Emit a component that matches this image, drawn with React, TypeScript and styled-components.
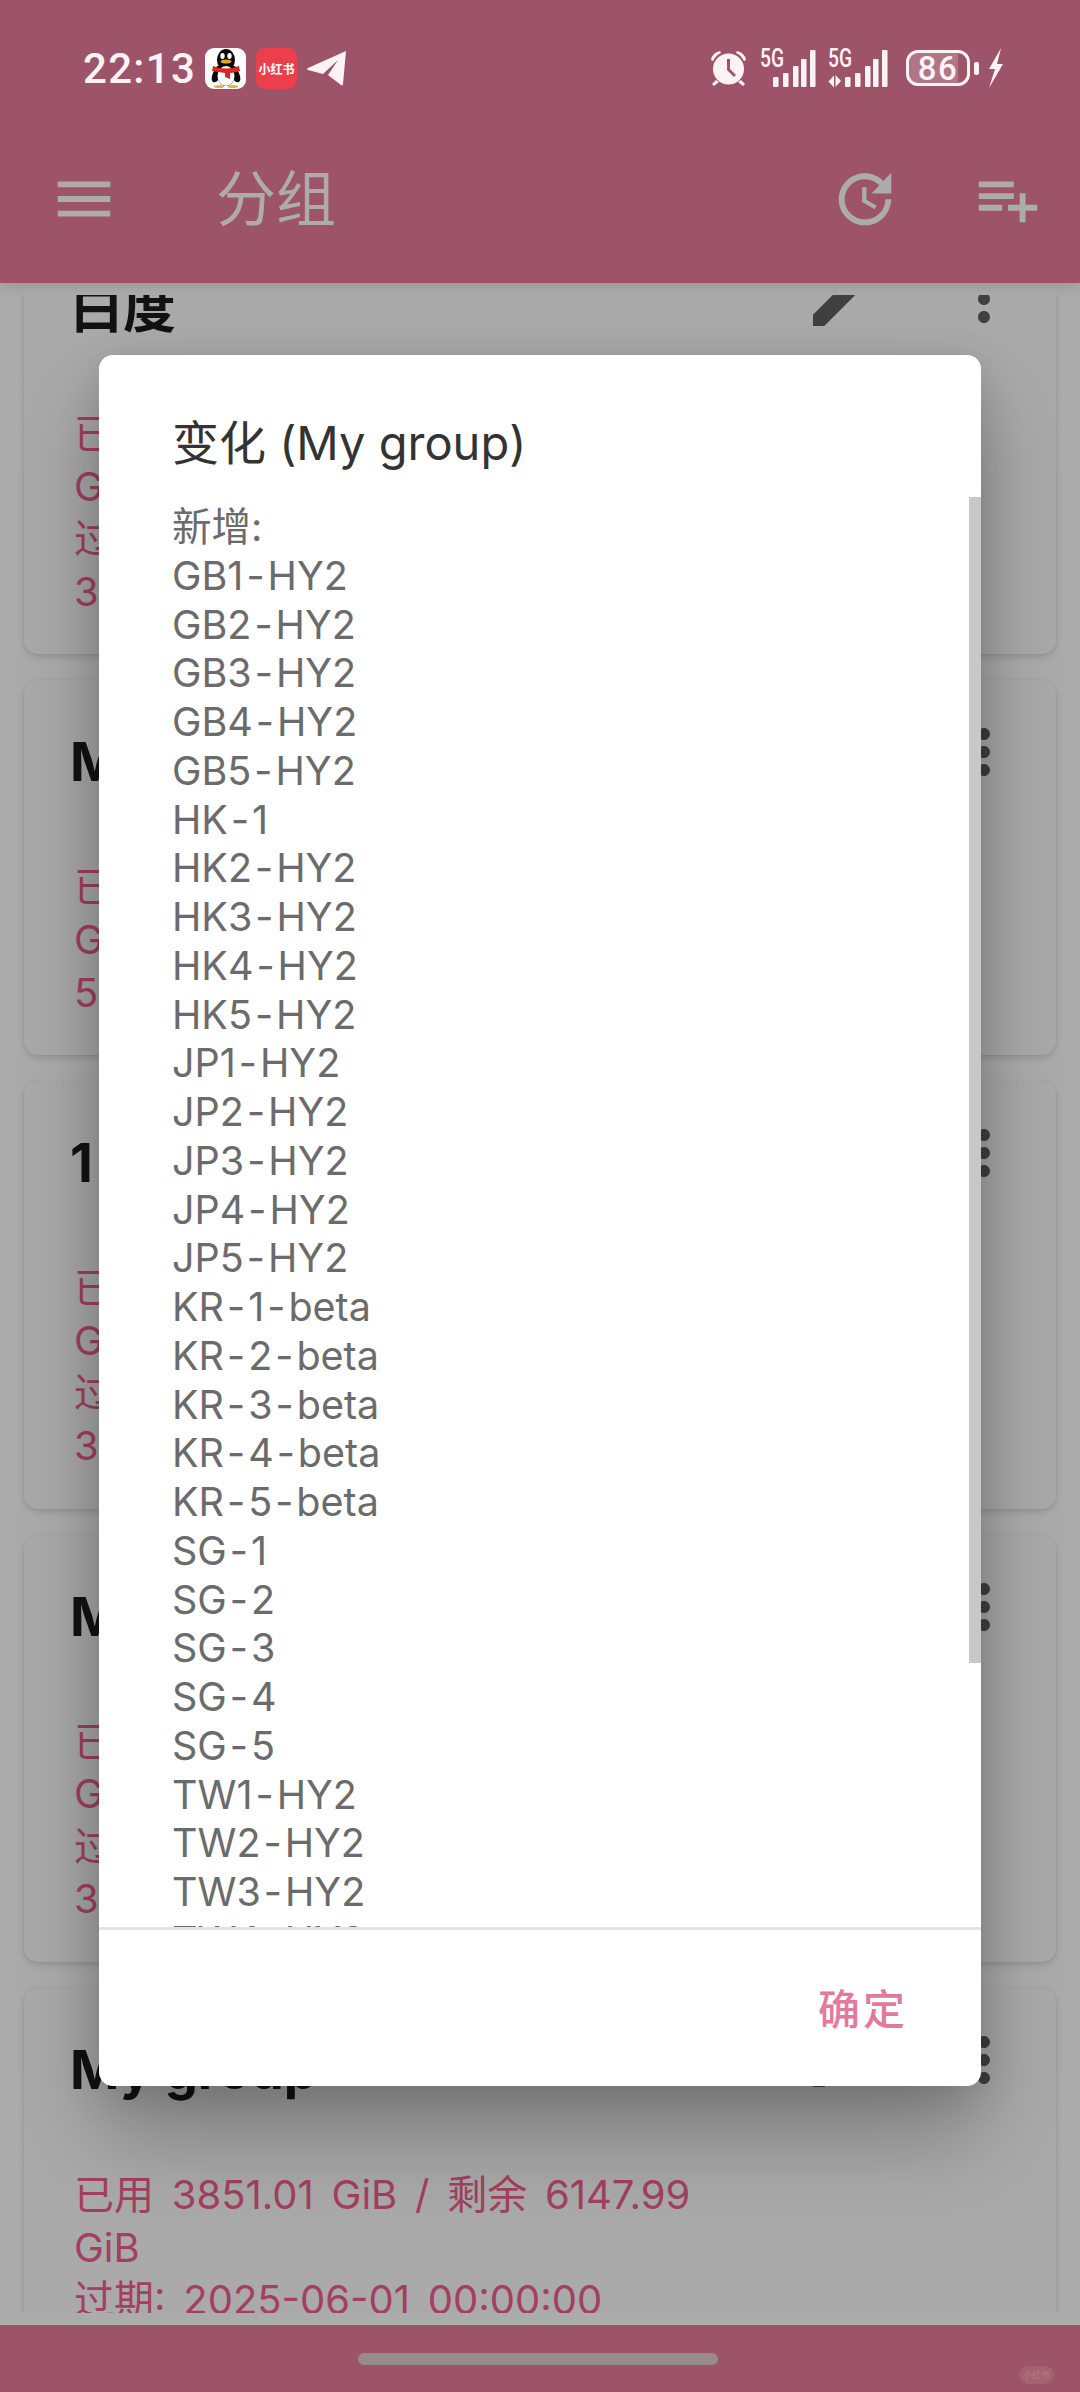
import React from "react";
import styled, { createGlobalStyle } from "styled-components";

const FONT = `Inter, "Noto Sans CJK SC", sans-serif`;
const CHROME = "#9d5468";
const DIM_ICON = "#acacac";
const STATUS = "#fdf3f6";

const Global = createGlobalStyle`
  html, body { margin: 0; padding: 0; background: #acacac; }
  body { font-family: ${FONT}; }
`;

const Page = styled.div`
  position: relative;
  width: 1080px;
  height: 2392px;
  overflow: hidden;
  display: flex;
  flex-direction: column;
  background: #acacac;
`;

const TopBar = styled.header`
  position: relative;
  z-index: 1;
  flex: none;
  height: 283px;
  background: ${CHROME};
  box-shadow: 0 4px 12px rgba(0, 0, 0, 0.12);
`;

const StatusBar = styled.div`
  height: 136px;
  padding: 0 77px 0 83px;
  display: flex;
  align-items: center;
  color: ${STATUS};
`;

const Time = styled.span`
  font-family: Roboto, sans-serif;
  font-size: 42px;
  font-weight: 500;
  letter-spacing: 1.3px;
  width: 122px;
`;

const AppTile = styled.span<{ $bg: string }>`
  width: 41px;
  height: 41px;
  margin-right: 10px;
  border-radius: 9px;
  background: ${(p) => p.$bg};
  display: flex;
  align-items: center;
  justify-content: center;
  overflow: hidden;
  flex: none;
`;

const RedBookLabel = styled.span`
  color: #fff;
  font-size: 12px;
  font-weight: 700;
  white-space: nowrap;
`;

const StatusRight = styled.div`
  margin-left: auto;
  display: flex;
  align-items: center;
`;

const BatteryShell = styled.div`
  width: 64px;
  height: 36px;
  box-sizing: border-box;
  margin-left: 17px;
  border: 3.5px solid ${STATUS};
  border-radius: 12px;
  background: linear-gradient(90deg, rgba(255, 255, 255, 0.2) 0 85%, transparent 85%);
  display: flex;
  align-items: center;
  justify-content: center;
  font-family: Roboto, sans-serif;
  font-size: 33px;
  font-weight: 500;
  letter-spacing: 1.5px;
  line-height: 1;
`;

const BatteryNub = styled.span`
  width: 5px;
  height: 13px;
  margin-left: 4px;
  border-radius: 2px;
  background: ${STATUS};
`;

const AppBar = styled.div`
  height: 126px;
  padding: 0 37px 0 49px;
  display: flex;
  align-items: center;
  color: ${DIM_ICON};
`;

const AppTitle = styled.h1`
  margin: 0 0 0 97px;
  font-size: 60px;
  font-weight: 400;
  line-height: 1;
`;

const AppActions = styled.div`
  margin-left: auto;
  display: flex;
  align-items: center;
  gap: 73px;
`;

const Viewport = styled.main`
  flex: none;
  height: 2018px;
  margin: 12px 0;
  overflow: hidden;
`;

const CardList = styled.div`
  margin-top: -68px;
  padding: 0 24px;
  display: flex;
  flex-direction: column;
  gap: 26px;
`;

const Card = styled.article`
  padding: 36px 36px 36px 46px;
  border-radius: 14px;
  background: #aaaaaa;
  box-shadow: 0 3px 6px rgba(0, 0, 0, 0.13), 0 0 2px rgba(0, 0, 0, 0.07);
`;

const CardHead = styled.div`
  height: 74px;
  display: flex;
  align-items: flex-start;
`;

const CardTitle = styled.h2`
  margin: 18px auto 0 0;
  height: 56px;
  color: #121212;
  font-size: 53px;
  font-weight: 700;
  line-height: 56px;
`;

const CardIcons = styled.div`
  display: flex;
  gap: 72px;
  color: #404040;
`;

const CardBody = styled.div`
  margin: 71px 0 0 4px;
  color: #a3405f;
  font-size: 40px;
  word-spacing: 6.5px;
  line-height: 52.6px;
  width: 640px;
`;

const BodyLine = styled.div`
  white-space: nowrap;
`;

const Scrim = styled.div`
  position: absolute;
  inset: 0;
  z-index: 2;
  padding: 355px 0 0 99px;
`;

const Dialog = styled.section`
  position: relative;
  width: 882px;
  height: 1731px;
  border-radius: 14px;
  background: #fff;
  display: flex;
  flex-direction: column;
  overflow: visible;
  box-shadow: 0 50px 90px rgba(0, 0, 0, 0.26), 0 10px 40px rgba(0, 0, 0, 0.14);
`;

const DialogTitle = styled.h3`
  flex: none;
  height: 142px;
  box-sizing: border-box;
  margin: 0;
  padding: 57px 0 0 73px;
  color: #333;
  font-size: 47px;
  font-weight: 400;
  line-height: 62px;
`;

const ChangeList = styled.div`
  flex: none;
  height: 1433px;
  box-sizing: border-box;
  padding: 6px 0 0 73px;
  overflow: hidden;
  color: #6b6b6b;
  font-size: 39.5px;
  line-height: 48.75px;
  border-bottom: 3px solid #e4e4e4;
`;

const Dash = styled.span`
  margin: 0 3px;
`;

const ScrollThumb = styled.div`
  position: absolute;
  top: 142px;
  right: 0;
  width: 12px;
  height: 1166px;
  background: #c8c8c8;
`;

const DialogFooter = styled.div`
  flex: 1;
  padding: 0 73px 3px 0;
  display: flex;
  align-items: center;
  justify-content: flex-end;
`;

const ConfirmButton = styled.button`
  border: 0;
  padding: 0;
  background: none;
  color: #e27a9e;
  font-family: ${FONT};
  font-size: 42px;
  font-weight: 500;
  letter-spacing: 3px;
`;

const BottomBar = styled.footer`
  position: relative;
  flex: none;
  height: 67px;
  background: #9d5368;
  display: flex;
  justify-content: center;
  padding-top: 28px;
  box-sizing: border-box;
`;

const HomePill = styled.div`
  width: 360px;
  height: 12px;
  border-radius: 6px;
  background: #998a8e;
  margin-left: -4px;
`;

const Watermark = styled.div`
  position: absolute;
  right: 26px;
  top: 41px;
  width: 35px;
  height: 18px;
  border-radius: 9px;
  background: #a4616f;
  color: #b37a88;
  font-size: 9px;
  line-height: 18px;
  text-align: center;
`;

const Glyph = ({ d, size = 72 }: { d: string; size?: number }) => (
  <svg width={size} height={size} viewBox="0 0 24 24" fill="currentColor" style={{ display: "block" }}>
    <path d={d} />
  </svg>
);

const ICONS = {
  menu: "M3 18h18v-2H3v2zm0-5h18v-2H3v2zm0-7v2h18V6H3z",
  update:
    "M21 10.12h-6.78l2.74-2.82c-2.73-2.7-7.15-2.8-9.88-.1-2.73 2.71-2.73 7.08 0 9.79s7.15 2.71 9.88 0C18.32 15.65 19 14.08 19 12.1h2c0 1.98-.88 4.55-2.64 6.29-3.51 3.48-9.21 3.48-12.72 0-3.5-3.47-3.53-9.11-.02-12.58s9.14-3.47 12.65 0L21 3v7.12zM12.5 8v4.25l3.5 2.08-.72 1.21L11 13V8h1.5z",
  playlist: "M14 10H2v2h12v-2zm0-4H2v2h12V6zm4 8v-4h-2v4h-4v2h4v4h2v-4h4v-2h-4zM2 16h8v-2H2v2z",
  edit: "M3 17.25V21h3.75L17.81 9.94l-3.75-3.75L3 17.25zM20.71 7.04c.39-.39.39-1.02 0-1.41l-2.34-2.34c-.39-.39-1.02-.39-1.41 0l-1.83 1.83 3.75 3.75 1.83-1.83z",
  more: "M12 8c1.1 0 2-.9 2-2s-.9-2-2-2-2 .9-2 2 .9 2 2 2zm0 2c-1.1 0-2 .9-2 2s.9 2 2 2 2-.9 2-2-.9-2-2-2zm0 6c-1.1 0-2 .9-2 2s.9 2 2 2 2-.9 2-2-.9-2-2-2z",
};

const QQPenguin = () => (
  <svg width="36" height="40" viewBox="0 0 36 40">
    <ellipse cx="18" cy="12" rx="9" ry="11" fill="#0b0b0b" />
    <path d="M9 18Q1 30 5 34q3 1 5-2 3 6 8 6t8-6q2 3 5 2 4-4-4-16z" fill="#0b0b0b" />
    <ellipse cx="18" cy="28" rx="8.5" ry="10" fill="#fff" />
    <ellipse cx="14.5" cy="8" rx="2.2" ry="3" fill="#fff" />
    <ellipse cx="21.5" cy="8" rx="2.2" ry="3" fill="#fff" />
    <ellipse cx="18" cy="13.5" rx="5.5" ry="2" fill="#f0a020" />
    <path d="M5 18q13 5 26 0l1 5q-6 2-10 2v6l-5-2v-4q-7-1-13-2z" fill="#d8291f" />
    <ellipse cx="11" cy="38.4" rx="5" ry="1.5" fill="#f0b030" />
    <ellipse cx="25" cy="38.4" rx="5" ry="1.5" fill="#f0b030" />
  </svg>
);

const TelegramPlane = () => (
  <svg width="40" height="35" viewBox="0 0 40 35" fill={STATUS}>
    <path d="M39 0 1 17q-2 1 0 2l15 4L31 9 21 24l13 10q2 1 2-1z" />
  </svg>
);

const AlarmClock = () => (
  <svg width="37" height="38" viewBox="0 0 37 38">
    <g fill={STATUS}>
      <circle cx="18.5" cy="20" r="15.5" />
      <path d="M1 11q1-7 9-9l1 2q-5 2-8 8zM36 11q-1-7-9-9l-1 2q5 2 8 8z" />
      <path d="M6 31l-4 4 2 2 5-4zM31 31l4 4-2 2-5-4z" />
    </g>
    <path d="M17 10h3v10l6 6-2 2-7-7z" fill="#9d5468" />
  </svg>
);

const SignalLabel = styled.text`
  font-family: Roboto, sans-serif;
  font-size: 25px;
  font-weight: 500;
`;

const BAR_HEIGHTS = [10, 14, 21, 28, 37];

const Signal = ({ arrows, gap, width, xs }: { arrows?: boolean; gap: number; width: number; xs: number[] }) => (
  <svg width={width} height="40" viewBox={`0 0 ${width} 40`} fill={STATUS} style={{ marginLeft: gap }}>
    <SignalLabel x="0" y="18.5" textLength="24" lengthAdjust="spacingAndGlyphs">5G</SignalLabel>
    {arrows && <path d="M0.5 33.5l5.5-6v12zM7.5 27v12l5.5-6z" />}
    {xs.map((x, i) => (
      <rect key={x} x={x} y={39 - BAR_HEIGHTS[i]} width="5.5" height={BAR_HEIGHTS[i]} rx="1" />
    ))}
  </svg>
);

const Bolt = () => (
  <svg width="15" height="40" viewBox="0 0 15 40" fill={STATUS} style={{ marginLeft: 9 }}>
    <path d="M13 0 1 21h6L1 40 15 16H9z" />
  </svg>
);

const ChangeLine = ({ text }: { text: string }) => (
  <div>
    {text.split("-").map((part, i) => (
      <React.Fragment key={i}>
        {i > 0 && <Dash>-</Dash>}
        {part}
      </React.Fragment>
    ))}
  </div>
);

const cards = [
  { title: "白度", lines: ["已用", "GiB", "过期:", "3"] },
  { title: "My group", lines: ["已用", "GiB", "5"] },
  { title: "1", lines: ["已用", "GiB", "过期:", "3"] },
  { title: "My group", lines: ["已用", "GiB", "过期:", "3"] },
  {
    title: "My group",
    lines: ["已用 3851.01 GiB / 剩余 6147.99", "GiB", "过期: 2025-06-01 00:00:00"],
  },
];

const changes = [
  "新增:",
  "GB1-HY2", "GB2-HY2", "GB3-HY2", "GB4-HY2", "GB5-HY2",
  "HK-1", "HK2-HY2", "HK3-HY2", "HK4-HY2", "HK5-HY2",
  "JP1-HY2", "JP2-HY2", "JP3-HY2", "JP4-HY2", "JP5-HY2",
  "KR-1-beta", "KR-2-beta", "KR-3-beta", "KR-4-beta", "KR-5-beta",
  "SG-1", "SG-2", "SG-3", "SG-4", "SG-5",
  "TW1-HY2", "TW2-HY2", "TW3-HY2", "TW4-HY2",
];

export default function App() {
  return (
    <Page>
      <Global />
      <TopBar>
        <StatusBar>
          <Time>22:13</Time>
          <AppTile $bg="#fff"><QQPenguin /></AppTile>
          <AppTile $bg="#ec3f4c"><RedBookLabel>小红书</RedBookLabel></AppTile>
          <TelegramPlane />
          <StatusRight>
            <AlarmClock />
            <Signal gap={13} width={56} xs={[13, 23, 33, 41, 50]} />
            <Signal gap={12} width={61} arrows xs={[17, 27, 37, 45, 54]} />
            <BatteryShell>86</BatteryShell>
            <BatteryNub />
            <Bolt />
          </StatusRight>
        </StatusBar>
        <AppBar>
          <Glyph d={ICONS.menu} size={70} />
          <AppTitle>分组</AppTitle>
          <AppActions>
            <Glyph d={ICONS.update} size={70} />
            <Glyph d={ICONS.playlist} size={70} />
          </AppActions>
        </AppBar>
      </TopBar>

      <Viewport>
        <CardList>
          {cards.map((card, i) => (
            <Card key={i}>
              <CardHead>
                <CardTitle>{card.title}</CardTitle>
                <CardIcons>
                  <Glyph d={ICONS.edit} />
                  <Glyph d={ICONS.more} />
                </CardIcons>
              </CardHead>
              <CardBody>
                {card.lines.map((line, j) => (
                  <BodyLine key={j}>{line}</BodyLine>
                ))}
              </CardBody>
            </Card>
          ))}
        </CardList>
      </Viewport>

      <BottomBar>
        <HomePill />
        <Watermark>小红书</Watermark>
      </BottomBar>

      <Scrim>
        <Dialog>
          <DialogTitle>变化 (My group)</DialogTitle>
          <ChangeList>
            {changes.map((c) => (
              <ChangeLine key={c} text={c} />
            ))}
          </ChangeList>
          <ScrollThumb />
          <DialogFooter>
            <ConfirmButton>确定</ConfirmButton>
          </DialogFooter>
        </Dialog>
      </Scrim>
    </Page>
  );
}
